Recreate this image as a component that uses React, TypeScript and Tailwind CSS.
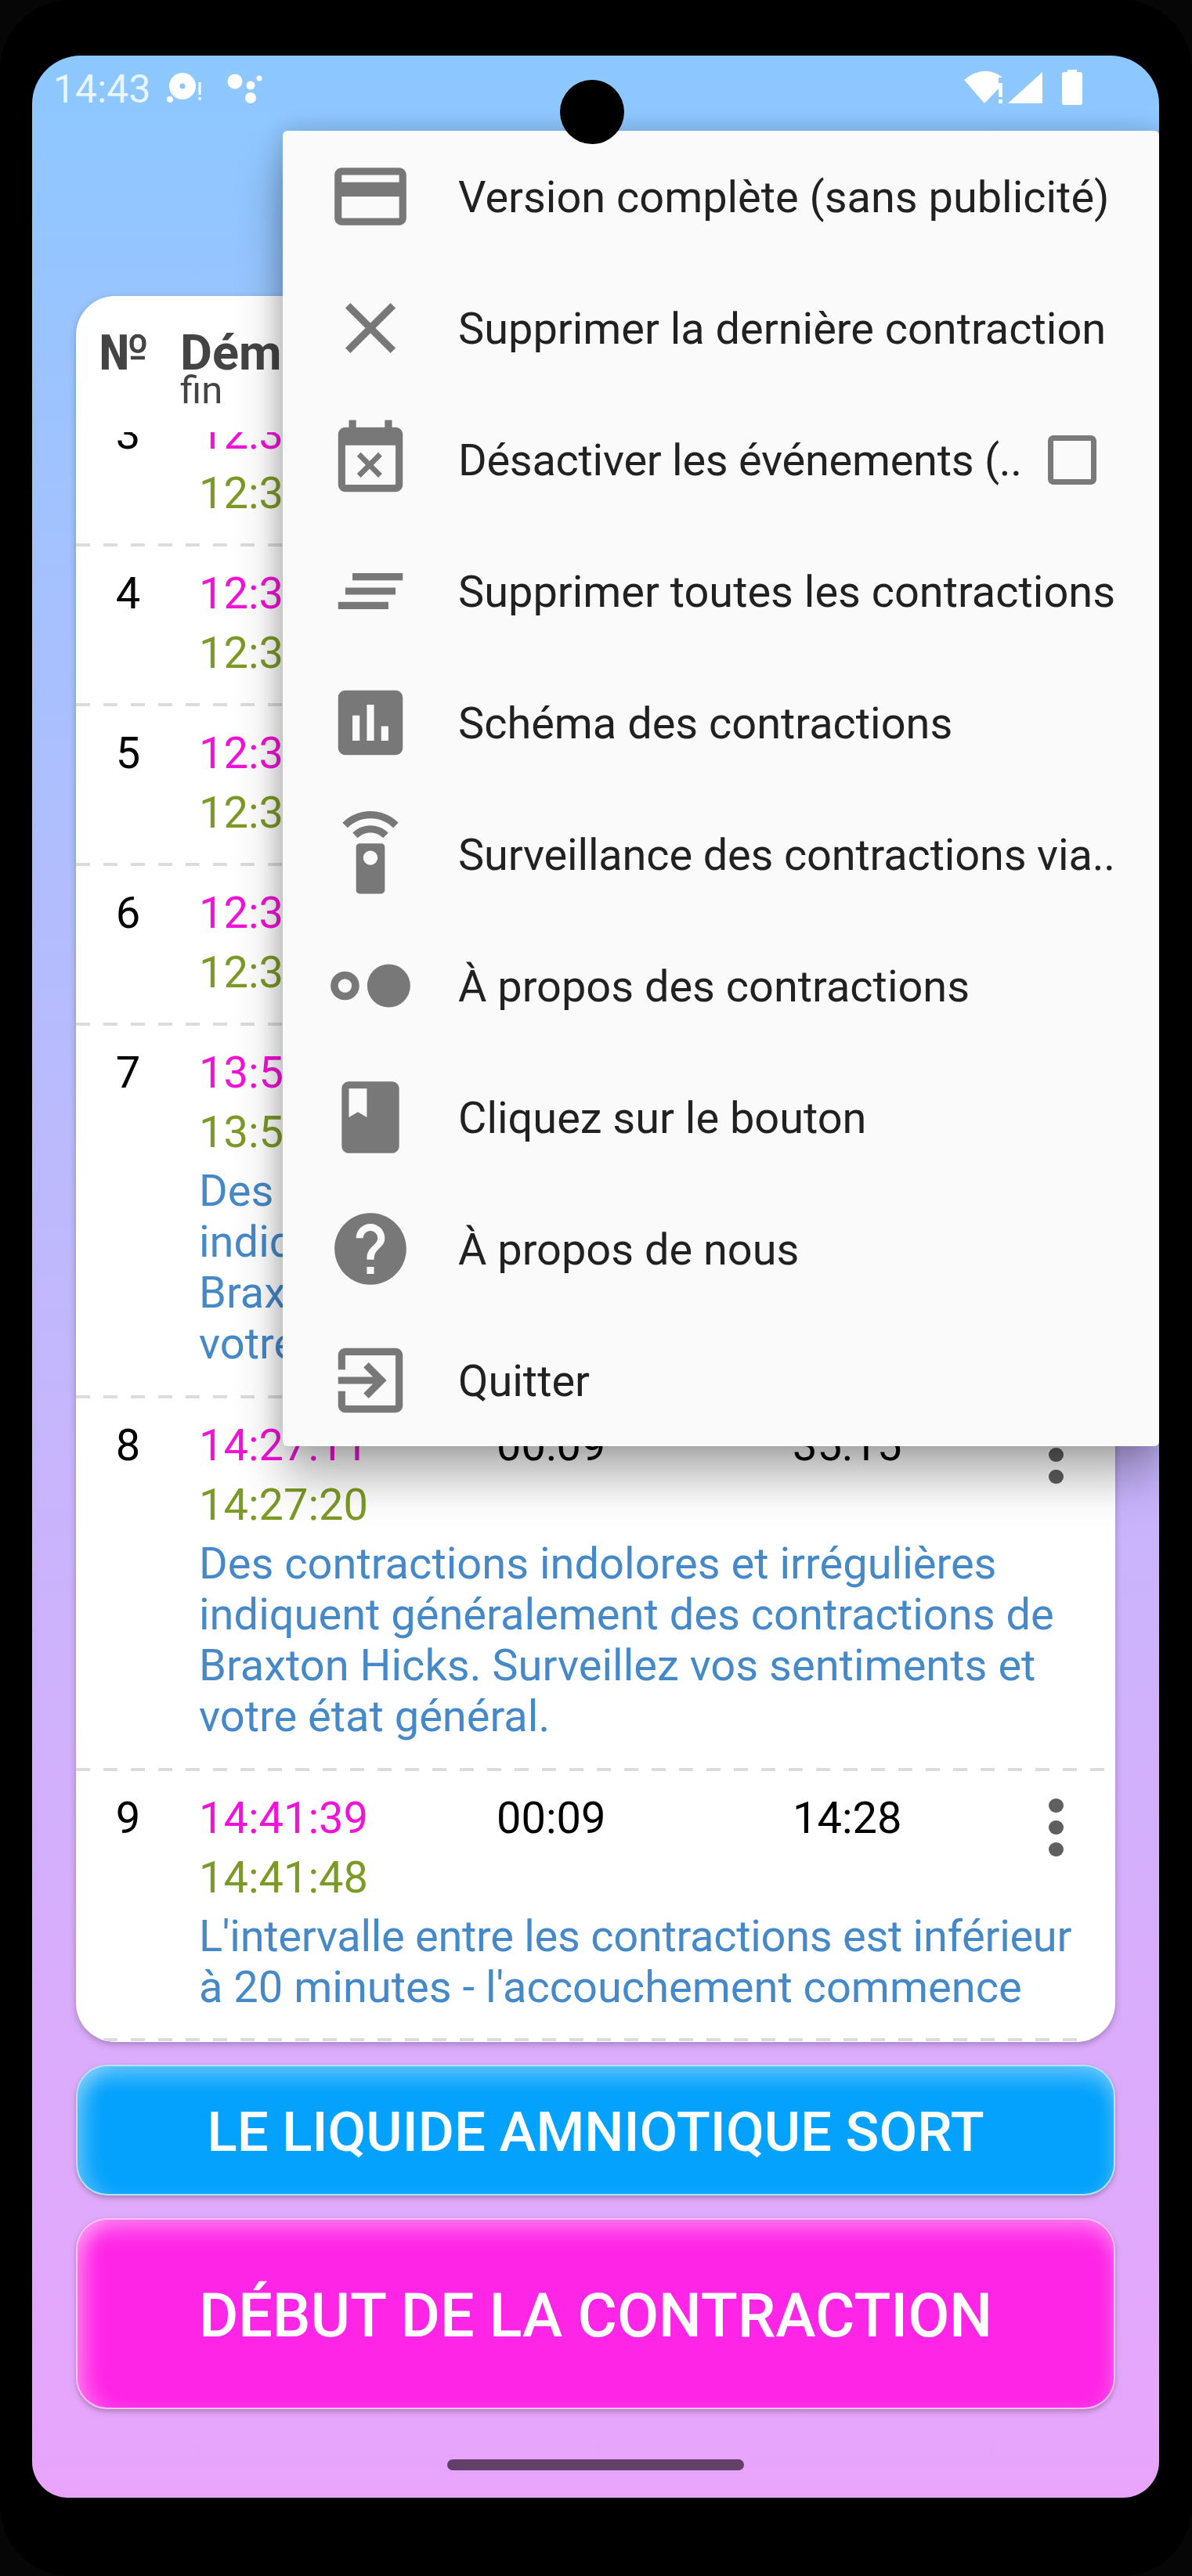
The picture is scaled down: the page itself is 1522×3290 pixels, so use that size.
const font = { fontFamily: "Roboto, sans-serif" };

type Row = {
  n: number;
  start: string;
  end: string;
  dur: string;
  gap: string;
  note?: string[];
  h: string;
};

const rows: Row[] = [
  { n: 3, start: "12:31:40", end: "12:31:52", dur: "00:12", gap: "01:05", h: "h-[204px]" },
  { n: 4, start: "12:32:44", end: "12:32:55", dur: "00:11", gap: "01:04", h: "h-[204px]" },
  { n: 5, start: "12:33:50", end: "12:34:01", dur: "00:11", gap: "01:06", h: "h-[204px]" },
  { n: 6, start: "12:34:58", end: "12:35:09", dur: "00:11", gap: "01:08", h: "h-[204px]" },
  {
    n: 7,
    start: "13:51:56",
    end: "13:52:05",
    dur: "00:09",
    gap: "76:58",
    h: "h-[476px]",
    note: [
      "Des contractions indolores et irrégulières",
      "indiquent généralement des contractions de",
      "Braxton Hicks. Surveillez vos sentiments et",
      "votre état général.",
    ],
  },
  {
    n: 8,
    start: "14:27:11",
    end: "14:27:20",
    dur: "00:09",
    gap: "35:15",
    h: "h-[476px]",
    note: [
      "Des contractions indolores et irrégulières",
      "indiquent généralement des contractions de",
      "Braxton Hicks. Surveillez vos sentiments et",
      "votre état général.",
    ],
  },
  {
    n: 9,
    start: "14:41:39",
    end: "14:41:48",
    dur: "00:09",
    gap: "14:28",
    h: "h-[345px]",
    note: [
      "L'intervalle entre les contractions est inférieur",
      "à 20 minutes - l'accouchement commence",
    ],
  },
];

function Icon({ children }: { children: React.ReactNode }) {
  return (
    <svg viewBox="0 0 24 24" className="w-[110px] h-[110px] shrink-0 fill-[#787878]">
      {children}
    </svg>
  );
}

const menu: { icon: React.ReactNode; label: string; check?: boolean; tight?: string }[] = [
  {
    label: "Version complète (sans publicité)",
    icon: <path d="M20 4H4c-1.11 0-1.99.89-1.99 2L2 18c0 1.11.89 2 2 2h16c1.11 0 2-.89 2-2V6c0-1.11-.89-2-2-2zm0 14H4v-6h16v6zm0-10H4V6h16v2z" />,
  },
  {
    label: "Supprimer la dernière contraction",
    icon: <path d="M19 6.41L17.59 5 12 10.59 6.41 5 5 6.41 10.59 12 5 17.59 6.41 19 12 13.41 17.59 19 19 17.59 13.41 12z" />,
  },
  {
    label: "Désactiver les événements (..",
    check: true,
    tight: "tracking-[-0.25px]",
    icon: <path d="M9.31 17l2.44-2.44L14.19 17l1.06-1.06-2.44-2.44 2.44-2.44L14.19 10l-2.44 2.44L9.31 10l-1.06 1.06 2.44 2.44-2.44 2.44L9.31 17zM19 3h-1V1h-2v2H8V1H6v2H5c-1.11 0-1.99.9-1.99 2L3 19c0 1.1.89 2 2 2h14c1.1 0 2-.9 2-2V5c0-1.1-.9-2-2-2zm0 16H5V8h14v11z" />,
  },
  {
    label: "Supprimer toutes les contractions",
    icon: <path d="M7 7h14v2H7zM5 11h14v2H5zM3 15h14v2H3z" />,
  },
  {
    label: "Schéma des contractions",
    icon: <path d="M19 3H5c-1.1 0-2 .9-2 2v14c0 1.1.9 2 2 2h14c1.1 0 2-.9 2-2V5c0-1.1-.9-2-2-2zM9 17H7v-7h2v7zm4 0h-2V7h2v10zm4 0h-2v-4h2v4z" />,
  },
  {
    label: "Surveillance des contractions via..",
    tight: "tracking-[-0.15px]",
    icon: <path d="M15 9H9c-.55 0-1 .45-1 1v12c0 .55.45 1 1 1h6c.55 0 1-.45 1-1V10c0-.55-.45-1-1-1zm-3 6c-1.1 0-2-.9-2-2s.9-2 2-2 2 .9 2 2-.9 2-2 2zM7.05 6.05l1.41 1.41C9.37 6.56 10.62 6 12 6s2.63.56 3.54 1.46l1.41-1.41C15.68 4.78 13.93 4 12 4s-3.68.78-4.95 2.05zM12 0C8.96 0 6.21 1.23 4.22 3.22l1.41 1.41C7.26 3.01 9.51 2 12 2s4.74 1.01 6.36 2.64l1.41-1.41C17.79 1.23 15.04 0 12 0z" />,
  },
  {
    label: "À propos des contractions",
    icon: (
      <path
        fillRule="evenodd"
        d="M.9 12a4 4 0 1 0 8 0a4 4 0 1 0-8 0zM3 12a1.9 1.9 0 1 1 3.8 0a1.9 1.9 0 1 1-3.8 0zM11.1 12a6 6 0 1 0 12 0a6 6 0 1 0-12 0z"
      />
    ),
  },
  {
    label: "Cliquez sur le bouton",
    icon: <path d="M18 2H6c-1.1 0-2 .9-2 2v16c0 1.1.9 2 2 2h12c1.1 0 2-.9 2-2V4c0-1.1-.9-2-2-2zM6 4h5v8l-2.5-1.5L6 12V4z" />,
  },
  {
    label: "À propos de nous",
    icon: <path d="M12 2C6.48 2 2 6.48 2 12s4.48 10 10 10 10-4.48 10-10S17.52 2 12 2zm1 17h-2v-2h2v2zm2.07-7.75l-.9.92C13.45 12.9 13 13.5 13 15h-2v-.5c0-1.1.45-2.1 1.17-2.83l1.24-1.26c.37-.36.59-.86.59-1.41 0-1.1-.9-2-2-2s-2 .9-2 2H8c0-2.21 1.79-4 4-4s4 1.79 4 4c0 .88-.36 1.68-.93 2.25z" />,
  },
  {
    label: "Quitter",
    icon: <path d="M10.09 15.59L11.5 17l5-5-5-5-1.41 1.41L12.67 11H3v2h9.67l-2.58 2.59zM19 3H5c-1.11 0-2 .9-2 2v4h2V5h14v14H5v-4H3v4c0 1.1.89 2 2 2h14c1.1 0 2-.9 2-2V5c0-1.1-.9-2-2-2z" />,
  },
];

function Dashes() {
  return (
    <div className="absolute bottom-0 left-0 right-[13px] h-[4px] bg-[repeating-linear-gradient(90deg,#dcdcdc_0_18px,transparent_18px_35px)]" />
  );
}

function TableRow({ row }: { row: Row }) {
  return (
    <div className={`relative flex ${row.h} text-[56px] leading-[76px]`}>
      <div className="w-[157px] pt-[22px] text-center pr-[24px] text-black">{row.n}</div>
      <div className="flex-1 pt-[22px]">
        <div className="flex">
          <div className="w-[380px]">
            <div className="text-[#f312d8]">{row.start}</div>
            <div className="text-[#7c9a26]">{row.end}</div>
          </div>
          <div className="w-[378px] text-black">{row.dur}</div>
          <div className="w-[327px] text-black">{row.gap}</div>
          <div className="flex flex-col gap-[10px] pt-[13px]">
            <span className="block w-[19px] h-[18px] rounded-full bg-[#5f5f5f]" />
            <span className="block w-[19px] h-[18px] rounded-full bg-[#5f5f5f]" />
            <span className="block w-[19px] h-[18px] rounded-full bg-[#5f5f5f]" />
          </div>
        </div>
        {row.note && (
          <div className="text-[56px] leading-[65px] text-[#4589c9] whitespace-nowrap mt-[5px]">
            {row.note.map((line) => (
              <div key={line} className={line.startsWith("L'intervalle") ? "tracking-[-0.3px]" : ""}>
                {line}
              </div>
            ))}
          </div>
        )}
      </div>
      <Dashes />
    </div>
  );
}

function StatusBar() {
  return (
    <div className="flex items-start justify-between h-[96px] pl-[27px] pr-[97px] pt-[15px] text-[#e9f5ff]">
      <div className="flex items-start">
        <span className="text-[50px] leading-[56px]">14:43</span>
        <svg width="160" height="56" viewBox="0 0 160 56" className="fill-white -ml-[6px]">
          <circle cx="46" cy="24" r="17" />
          <circle cx="46" cy="24" r="3.5" className="fill-[#8cc8ff]" />
          <circle cx="30" cy="41" r="4" />
          <rect x="66.5" y="19" width="3" height="16" />
          <rect x="66.5" y="38" width="3" height="4" />
          <circle cx="113" cy="18" r="9.5" />
          <circle cx="133" cy="23" r="5.5" />
          <circle cx="133" cy="39" r="7" />
          <circle cx="144" cy="14" r="3.5" />
        </svg>
      </div>
      <svg width="152" height="50" viewBox="0 0 152 50" className="fill-white mt-[3px]">
        <path d="M0 13 Q26 -8 49 10 L44 10 L44 24 L26 43 Z" />
        <rect x="44" y="17" width="5" height="18" />
        <rect x="44" y="38" width="5" height="5" />
        <path d="M56 43 L100 3 V43 Z" />
        <path d="M132 0 h12 v3 h4 a3 3 0 0 1 3 3 v36 a3 3 0 0 1-3 3 h-20 a3 3 0 0 1-3-3 v-36 a3 3 0 0 1 3-3 h4 z" />
      </svg>
    </div>
  );
}

export default function App() {
  return (
    <div style={font} className="relative w-[1522px] h-[3290px] bg-[#060606] overflow-hidden">
      <div className="h-full bg-black rounded-[90px] pt-[71px] pl-[41px] pr-[42px] pb-[100px]">
        {/* screen */}
        <div className="relative h-[3119px] rounded-t-[62px] rounded-b-[46px] overflow-hidden bg-gradient-to-b from-[#8cc8ff] to-[#e8a4fa]">
          <StatusBar />

          <div className="px-[56px] pt-[211px]">
            {/* contractions table */}
            <div className="h-[2230px] rounded-[50px] bg-white overflow-hidden shadow-[0_3px_8px_rgba(0,0,0,0.25)]">
              <div className="flex h-[174px]">
                <div className="w-[133px] pl-[29px] pt-[43px] text-[63px] leading-[60px] font-bold text-[#444444]">№</div>
                <div className="pt-[43px] text-[#444444]">
                  <div className="text-[63px] leading-[60px] font-bold">Démarrer</div>
                  <div className="text-[49px] leading-[42px] -mt-[3px]">fin</div>
                </div>
              </div>
              <div className="h-[2056px] overflow-hidden">
                <div className="-mt-[58px]">
                  {rows.map((row) => (
                    <TableRow key={row.n} row={row} />
                  ))}
                </div>
              </div>
            </div>

            {/* buttons */}
            <div className="mt-[29px] flex flex-col gap-[29px]">
              <button className="h-[167px] pt-[6px] rounded-[40px] border-2 border-white/70 bg-[#04a2fc] text-white text-[70.8px] font-medium shadow-[0_3px_6px_rgba(0,0,0,0.25),inset_0_22px_26px_-8px_rgba(255,255,255,0.35),inset_24px_0_24px_-12px_rgba(255,255,255,0.28),inset_-16px_0_20px_-12px_rgba(255,255,255,0.15)]">
                LE LIQUIDE AMNIOTIQUE SORT
              </button>
              <button className="h-[244px] pt-[6px] rounded-[40px] border-2 border-white/70 bg-[#ff25e6] text-white text-[77.2px] font-medium shadow-[0_3px_6px_rgba(0,0,0,0.25),inset_0_22px_26px_-8px_rgba(255,255,255,0.35),inset_24px_0_24px_-12px_rgba(255,255,255,0.32),inset_-16px_0_20px_-12px_rgba(255,255,255,0.15)]">
                DÉBUT DE LA CONTRACTION
              </button>
            </div>
          </div>

          {/* home indicator */}
          <div className="absolute bottom-[35px] left-[530px] w-[379px] h-[14px] rounded-full bg-[#634069]" />

          {/* overflow menu */}
          <div className="absolute top-[96px] right-0 w-[1119px] rounded-[6px] bg-[#fafafa] shadow-[0_40px_60px_rgba(0,0,0,0.3),0_0_30px_rgba(0,0,0,0.18)]">
            {menu.map((item) => (
              <div key={item.label} className="flex items-center h-[168px] pl-[57px]">
                <Icon>{item.icon}</Icon>
                <span className={`ml-[57px] pt-[3px] text-[55.9px] text-[#212121] whitespace-nowrap ${item.tight ?? ""}`}>{item.label}</span>
                {item.check && (
                  <span className="absolute left-[977px] w-[62px] h-[63px] rounded-[7px] border-[7px] border-[#7a7a7a]" />
                )}
              </div>
            ))}
          </div>
        </div>
      </div>

      {/* camera cutout */}
      <div className="absolute left-[715px] top-[102px] w-[82px] h-[82px] rounded-full bg-black" />
    </div>
  );
}
